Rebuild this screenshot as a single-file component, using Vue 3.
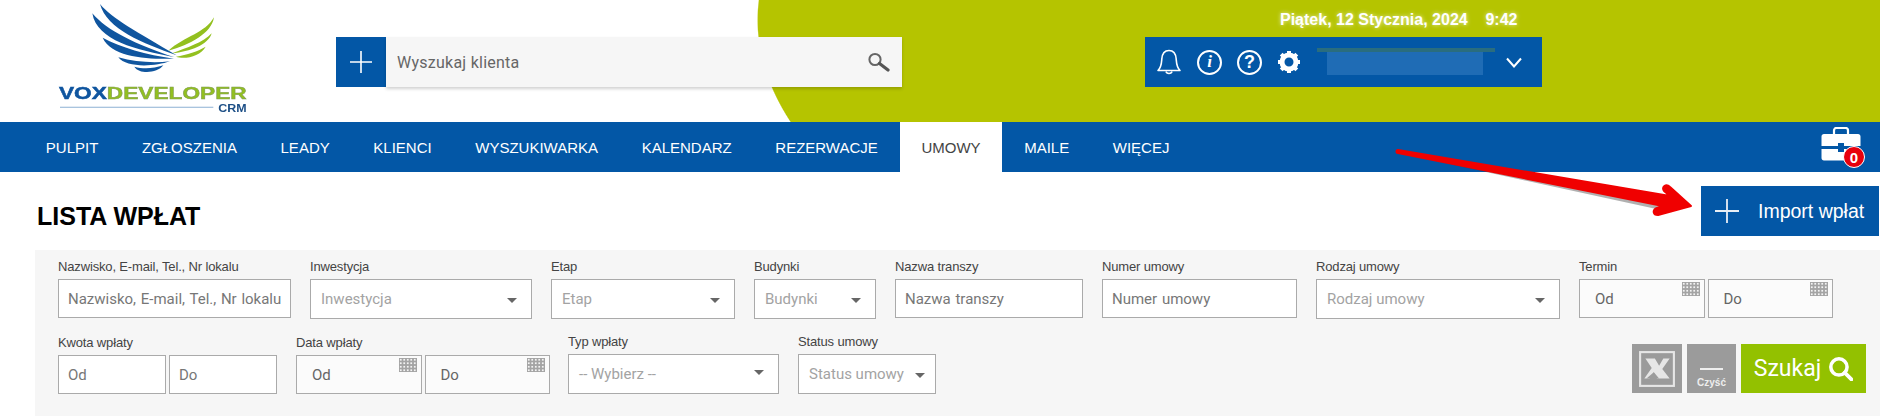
<script setup>
const menu = ['PULPIT', 'ZGŁOSZENIA', 'LEADY', 'KLIENCI', 'WYSZUKIWARKA', 'KALENDARZ', 'REZERWACJE', 'UMOWY', 'MAILE', 'WIĘCEJ']

const firstRow = [
  { label: 'Nazwisko, E-mail, Tel., Nr lokalu', type: 'text', width: 233 },
  { label: 'Inwestycja', type: 'select', width: 222 },
  { label: 'Etap', type: 'select', width: 184 },
  { label: 'Budynki', type: 'select', width: 122 },
  { label: 'Nazwa transzy', type: 'text', width: 188 },
  { label: 'Numer umowy', type: 'text', width: 195 },
  { label: 'Rodzaj umowy', type: 'select', width: 244 }
]
</script>

<template>
  <div class="page">
    <header class="top">
      <svg class="logo" viewBox="0 0 690 366" width="230" height="122">
        <g fill="#0f559f">
          <path d="M180 12C215 55 290 95 410 166C310 130 200 88 180 12Z" />
          <path d="M157 40C200 92 290 135 404 172C290 150 170 122 157 40Z" />
          <path d="M188 113C240 142 320 164 402 176C320 178 215 172 188 113Z" />
          <path d="M235 172C285 186 340 190 390 184C345 200 258 204 235 172Z" />
          <path d="M283 200C310 208 340 206 370 196C352 220 298 224 283 200Z" />
        </g>
        <g fill="#93c01f">
          <path d="M522 52C515 100 450 135 385 152C435 108 495 100 522 52Z" />
          <path d="M515 100C505 135 450 155 396 160C440 143 490 128 515 100Z" />
          <path d="M497 140C482 168 435 180 408 170C440 165 475 153 497 140Z" />
        </g>
        <text class="logo-name" x="57" y="296" textLength="563" lengthAdjust="spacingAndGlyphs"><tspan fill="#0f559f" stroke="#0f559f">VOX</tspan><tspan fill="#93c01f" stroke="#7f9a55">DEVELOPER</tspan></text>
        <rect x="60" y="320" width="460" height="4" fill="#a9c4de" />
        <text class="logo-crm" x="535" y="336" textLength="85" lengthAdjust="spacingAndGlyphs">CRM</text>
      </svg>

      <div class="search">
        <button class="search-add">
          <svg viewBox="0 0 24 24" width="24" height="24"><path d="M12 1v22M1 12h22" stroke="#fff" stroke-width="1.6" fill="none" /></svg>
        </button>
        <div class="search-box">
          <input class="search-input" placeholder="Wyszukaj klienta" />
          <svg viewBox="0 0 24 20" width="26" height="20">
            <circle cx="8" cy="7.5" r="5.6" fill="none" stroke="#666" stroke-width="2" />
            <path d="M12.5 11.5L21 18" stroke="#555" stroke-width="3.2" stroke-linecap="round" />
          </svg>
        </div>
      </div>

      <div class="account">
        <div class="date">Piątek, 12 Stycznia, 2024&nbsp;&nbsp;&nbsp; 9:42</div>
        <div class="user-bar">
          <svg viewBox="0 0 26 26" width="26" height="26" class="bell">
            <path d="M2 21.5C5.5 18 5.5 14 5.8 10C6.2 4.500 9 1.500 13 1.500S19.800 4.500 20.200 10C20.500 14 20.500 18 24 21.500Z" fill="none" stroke="#fff" stroke-width="1.6" stroke-linejoin="round" />
            <path d="M10 22.500C10.500 25 15.500 25 16 22.500" fill="none" stroke="#fff" stroke-width="1.500" />
          </svg>
          <span class="round-icon info">i</span>
          <span class="round-icon help">?</span>
          <svg viewBox="0 0 24 24" width="24" height="24" class="gear">
            <circle cx="12" cy="12" r="7" fill="none" stroke="#fff" stroke-width="5" />
            <path d="M12 1v5M12 18v5M1 12h5M18 12h5M4.200 4.200l3.500 3.500M16.300 16.300l3.500 3.500M4.200 19.800l3.500-3.500M16.300 7.700l3.500-3.500" stroke="#fff" stroke-width="4" />
          </svg>
          <div class="user-name">
            <div class="blur-line"></div>
            <div class="blur-block"></div>
          </div>
          <svg viewBox="0 0 16 11" width="16" height="11" class="chevron">
            <path d="M1 1.500L8 9.500L15 1.500" fill="none" stroke="#fff" stroke-width="2" />
          </svg>
        </div>
      </div>
    </header>

    <nav class="menu">
      <a v-for="item in menu" :key="item" class="menu-item" :class="{ active: item === 'UMOWY' }">{{ item }}</a>
      <div class="toolbox">
        <svg viewBox="0 0 40 34" width="40" height="34">
          <path d="M13 7V3.500C13 2 14 1 15.500 1H24.500C26 1 27 2 27 3.500V7" fill="none" stroke="#fff" stroke-width="2.200" />
          <path d="M3 7H37C38.500 7 39.500 8 39.500 9.500V19H23V16H17V19H.5V9.500C.5 8 1.500 7 3 7Z" fill="#fff" />
          <path d="M.5 22H17V25H23V22H39.500V31C39.500 32.500 38.500 33.500 37 33.500H3C1.500 33.500 .5 32.500 .5 31Z" fill="#fff" />
        </svg>
        <span class="badge">0</span>
      </div>
    </nav>

    <div class="title-row">
      <h1>LISTA WPŁAT</h1>
      <button class="import-btn">
        <svg viewBox="0 0 24 24" width="24" height="24"><path d="M12 0v24M0 12h24" stroke="#e8eef5" stroke-width="1.800" fill="none" /></svg>
        <span>Import wpłat</span>
      </button>
    </div>

    <section class="filters">
      <div class="filter-row">
        <div v-for="f in firstRow" :key="f.label" class="field" :style="{ width: f.width + 'px' }">
          <label>{{ f.label }}</label>
          <input v-if="f.type === 'text'" class="input" :placeholder="f.label" />
          <div v-else class="select"><span>{{ f.label }}</span><i class="caret"></i></div>
        </div>
        <div class="field term">
          <label>Termin</label>
          <div class="pair">
            <div class="date-input"><input class="input dated" placeholder="Od" /><i class="cal"></i></div>
            <div class="date-input"><input class="input dated" placeholder="Do" /><i class="cal"></i></div>
          </div>
        </div>
      </div>

      <div class="filter-row second">
        <div class="field amount">
          <label>Kwota wpłaty</label>
          <div class="pair">
            <input class="input" placeholder="Od" />
            <input class="input" placeholder="Do" />
          </div>
        </div>
        <div class="field paid">
          <label>Data wpłaty</label>
          <div class="pair">
            <div class="date-input"><input class="input dated" placeholder="Od" /><i class="cal"></i></div>
            <div class="date-input"><input class="input dated" placeholder="Do" /><i class="cal"></i></div>
          </div>
        </div>
        <div class="field kind">
          <label>Typ wpłaty</label>
          <div class="select"><span>-- Wybierz --</span><i class="caret raised"></i></div>
        </div>
        <div class="field status">
          <label>Status umowy</label>
          <div class="select"><span>Status umowy</span><i class="caret"></i></div>
        </div>

        <div class="actions">
          <button class="btn-grey excel">
            <svg viewBox="0 0 36 36" width="38" height="38">
              <rect x="2" y="2" width="32" height="32" fill="none" stroke="#e6e6e6" stroke-width="2" />
              <path d="M7 8H16L20 15L24 8H30L23 18L30 27H18L15 21L11 27H6L13 17Z" fill="#e6e6e6" />
              <path d="M8 27L15 21L20 27Z" fill="#9b9b9b" />
            </svg>
          </button>
          <button class="btn-grey clear">
            <span class="dash"></span>
            <span class="clear-text">Czyść</span>
          </button>
          <button class="btn-search">
            <span>Szukaj</span>
            <svg viewBox="0 0 24 24" width="25" height="25">
              <circle cx="10.500" cy="10.500" r="7.800" fill="none" stroke="#fff" stroke-width="3.400" />
              <path d="M16 16L22.500 22.500" stroke="#fff" stroke-width="3.600" stroke-linecap="round" />
            </svg>
          </button>
        </div>
      </div>
    </section>

    <svg class="arrow" viewBox="0 0 310 80" width="310" height="80">
      <path d="M6 8L266 59L268 65L6 8Z" fill="#3a3a3a" opacity=".4" />
      <path d="M5 5C3 5 3 8 5 8L270 61L264 63C259 65 260 70 265 70L298 61L277 42C273 38 268 42 271 46L277 51Z" fill="#f00000" stroke="#f00000" stroke-width="2" stroke-linejoin="round" />
    </svg>
  </div>
</template>

<style>
body {
  background: #fff;
  overflow: hidden;
}
</style>

<style scoped>
.page {
  position: relative;
  width: 1880px;
  height: 416px;
  font-family: "Liberation Sans", Arial, sans-serif;
  background: #fff;
  overflow: hidden;
}

.top {
  height: 122px;
  display: flex;
  align-items: flex-start;
  background: radial-gradient(ellipse 1200px 438px at 1957px 20px, #b5c400 99.9%, transparent 100%);
}

.logo {
  margin-left: 40px;
  filter: blur(0.4px);
  flex: none;
}

.logo-name {
  font-size: 52px;
  font-weight: 700;
  stroke-width: 1.5px;
}

.logo-crm {
  font-size: 34px;
  font-weight: 700;
  fill: #1d4f86;
}

.search {
  display: flex;
  margin: 37px 0 0 66px;
  height: 50px;
  width: 566px;
}

.search-add {
  width: 50px;
  background: #0357a6;
  border: none;
  padding: 0;
  display: flex;
  align-items: center;
  justify-content: center;
}

.search-box {
  flex: 1;
  display: flex;
  align-items: center;
  background: #f6f6f6;
  box-shadow: 0 2px 3px rgba(0, 0, 0, 0.18);
  padding-right: 10px;
}

.search-input {
  flex: 1;
  min-width: 0;
  height: 100%;
  border: none;
  background: transparent;
  outline: none;
  padding: 0 0 0 11px;
  font-family: Roboto, sans-serif;
  font-size: 16px;
  letter-spacing: 0.25px;
}

.search-input::placeholder {
  color: #666;
  opacity: 1;
}

.account {
  margin-left: 243px;
  width: 397px;
}

.date {
  height: 37px;
  padding: 11px 0 0 135px;
  box-sizing: border-box;
  color: #fff;
  font-size: 16px;
  line-height: 18px;
  font-weight: 700;
  white-space: nowrap;
  text-shadow: 0 0 4px rgba(255, 255, 255, 0.7);
}

.user-bar {
  height: 50px;
  background: #0357a6;
  box-sizing: border-box;
  padding-left: 11px;
  display: flex;
  align-items: center;
}

.round-icon {
  width: 25px;
  height: 25px;
  box-sizing: border-box;
  border: 2px solid #fff;
  border-radius: 50%;
  color: #fff;
  display: flex;
  align-items: center;
  justify-content: center;
  font-weight: 700;
}

.info {
  margin-left: 15px;
  font-family: "Liberation Serif", serif;
  font-style: italic;
  font-size: 17px;
}

.help {
  margin-left: 15px;
  font-size: 18px;
}

.gear {
  margin-left: 15px;
}

.user-name {
  margin-left: 16px;
  width: 178px;
  height: 27px;
  margin-top: -1px;
}

.blur-line {
  height: 4px;
  background: #2a6d7e;
}

.blur-block {
  margin-left: 10px;
  width: 156px;
  height: 23px;
  background: #1f6cb5;
}

.chevron {
  margin-left: 11px;
}

.menu {
  height: 50px;
  background: #0357a6;
  padding-left: 24px;
  display: flex;
  align-items: stretch;
}

.menu-item {
  padding: 0 21.8px;
  display: flex;
  align-items: center;
  color: #fff;
  font-size: 15px;
}

.menu-item.active {
  background: #fff;
  color: #444;
}

.toolbox {
  position: relative;
  margin-left: auto;
  margin-right: 19px;
  margin-top: 5px;
  width: 40px;
}

.badge {
  position: absolute;
  left: 22px;
  top: 19px;
  width: 22px;
  height: 22px;
  box-sizing: border-box;
  border: 1px solid #fff;
  border-radius: 50%;
  background: #e8000d;
  color: #fff;
  font-size: 15px;
  font-weight: 700;
  display: flex;
  align-items: center;
  justify-content: center;
}

.title-row {
  height: 78px;
  box-sizing: border-box;
  padding: 14px 0 0 37px;
  display: flex;
  align-items: flex-start;
  justify-content: space-between;
}

h1 {
  margin: 14px 0 0;
  font-size: 25px;
  line-height: 32px;
  font-weight: 700;
  color: #000;
}

.import-btn {
  width: 178px;
  height: 50px;
  margin-right: 1px;
  border: none;
  background: #0357a6;
  color: #fff;
  font-family: inherit;
  font-size: 19.5px;
  padding: 0 0 0 14px;
  display: flex;
  align-items: center;
  gap: 19px;
}

.filters {
  margin-left: 35px;
  height: 166px;
  box-sizing: border-box;
  padding: 8px 14px 0 23px;
  background: #f6f6f6;
}

.filter-row {
  display: flex;
  gap: 19px;
  align-items: flex-start;
}

.filter-row.second {
  margin-top: 14px;
  align-items: flex-end;
}

.field label {
  display: block;
  height: 21px;
  line-height: 18px;
  font-size: 13px;
  letter-spacing: -0.15px;
  color: #444;
  white-space: nowrap;
}

.input {
  width: 100%;
  height: 39px;
  box-sizing: border-box;
  border: 1px solid #aaa;
  background: #fff;
  padding: 0 0 0 9px;
  outline: none;
  font-family: Roboto, sans-serif;
  font-size: 15px;
  word-spacing: 1px;
}

.input::placeholder {
  color: #777;
  opacity: 1;
}

.select {
  height: 40px;
  box-sizing: border-box;
  border: 1px solid #aaa;
  background: #fff;
  padding: 0 14px 0 10px;
  display: flex;
  align-items: center;
  justify-content: space-between;
  font-family: Roboto, sans-serif;
  font-size: 15px;
  color: #a3a3a3;
}

.caret {
  width: 0;
  height: 0;
  border-left: 5px solid transparent;
  border-right: 5px solid transparent;
  border-top: 5px solid #666;
  margin-top: 2px;
}

.caret.raised {
  margin-top: -4px;
}

.pair {
  display: flex;
  gap: 3px;
}

.term {
  width: 254px;
}

.amount {
  width: 219px;
}

.paid {
  width: 254px;
  margin-right: -1px;
}

.kind {
  width: 211px;
}

.status {
  width: 138px;
}

.status .select {
  padding-right: 10px;
}

.date-input {
  position: relative;
  flex: 1;
}

.input.dated {
  background: #fbfbfb;
  padding-left: 15px;
}

.input.dated::placeholder {
  color: #666;
}

.cal {
  position: absolute;
  right: 5px;
  top: 3px;
  width: 18px;
  height: 14px;
  background-color: #a4a4a4;
  background-image: radial-gradient(circle, #f4f4f4 0.7px, transparent 1px);
  background-size: 3.5px 3.5px;
  background-position: 0 0;
}

.actions {
  margin-left: auto;
  display: flex;
  gap: 5px;
  height: 49px;
  margin-bottom: 1px;
}

.btn-grey {
  border: none;
  padding: 0;
  background: #9b9b9b;
  color: #fff;
  display: flex;
  flex-direction: column;
  align-items: center;
  justify-content: center;
}

.excel {
  width: 50px;
}

.clear {
  width: 49px;
  justify-content: flex-end;
  padding-bottom: 5px;
}

.dash {
  width: 23px;
  height: 2px;
  background: #eee;
  margin-bottom: 7px;
}

.clear-text {
  font-family: inherit;
  font-size: 10px;
  font-weight: 700;
  color: #eee;
}

.btn-search {
  width: 125px;
  border: none;
  padding: 0;
  background: #93c100;
  color: #fff;
  font-family: Roboto, sans-serif;
  font-size: 23px;
  display: flex;
  align-items: center;
  justify-content: center;
  gap: 7px;
}

.arrow {
  position: absolute;
  left: 1393px;
  top: 145px;
}
</style>
